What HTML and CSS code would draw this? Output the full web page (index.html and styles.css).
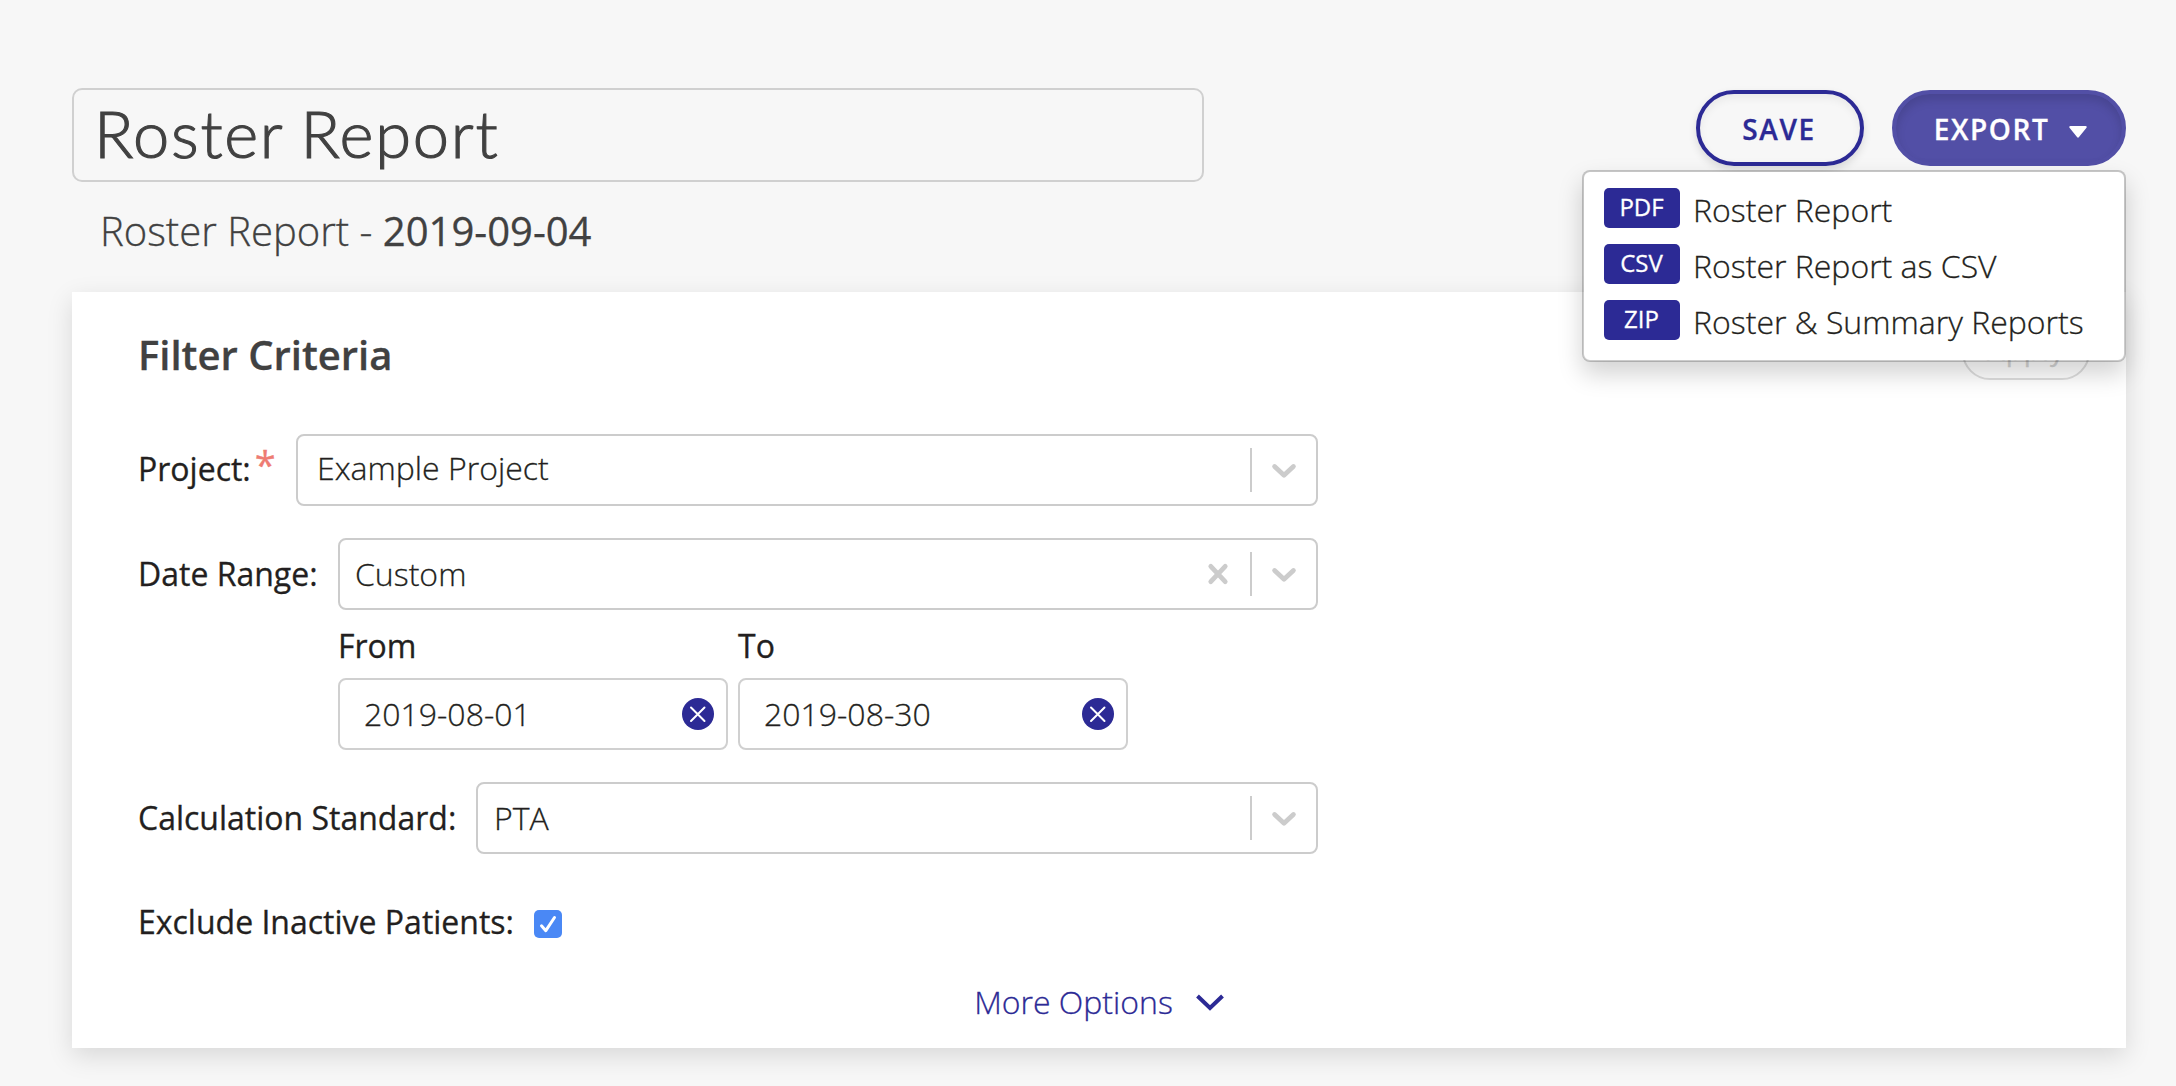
FILE: index.html
```html
<!DOCTYPE html>
<html lang="en">
<head>
  <meta charset="UTF-8">
  <title>Roster Report</title>
  <link rel="stylesheet" href="styles.css">
</head>
<body>
  <div class="page">
    <header class="header">
      <div class="titles">
        <div class="title-input">Roster Report</div>
        <p class="subtitle">Roster Report - <b>2019-09-04</b></p>
      </div>
      <div class="actions">
        <button class="btn save-btn">SAVE</button>
        <div class="dropdown">
          <button class="btn export-btn">EXPORT
            <svg width="18" height="12" viewBox="0 0 18 12"><path d="M1.5 0h15q2 .3.8 2L10 11q-1 1.400-2 0L.7 2Q-.5.3 1.500 0z" fill="#fff"/></svg>
          </button>
          <ul class="menu">
            <li><span class="badge">PDF</span><span class="menu-text">Roster Report</span></li>
            <li><span class="badge">CSV</span><span class="menu-text">Roster Report as CSV</span></li>
            <li><span class="badge">ZIP</span><span class="menu-text">Roster &amp; Summary Reports</span></li>
          </ul>
        </div>
      </div>
    </header>

    <main class="card">
      <div class="card-header">
        <h2>Filter Criteria</h2>
        <button class="apply-btn">Apply</button>
      </div>

      <div class="row project-row">
        <label>Project:<span class="required">*</span></label>
        <div class="select project-select">
          <span class="value">Example Project</span>
          <span class="separator"></span>
          <svg class="arrow" width="40" height="40" viewBox="0 0 40 40"><path d="M10.600 15.500L20 24.300L29.400 15.500"/></svg>
        </div>
      </div>

      <div class="row date-row">
        <label>Date Range:</label>
        <div class="select">
          <span class="value">Custom</span>
          <svg class="clear" width="40" height="40" viewBox="0 0 40 40"><path d="M12.800 12.300L27.200 27.700M27.200 12.300L12.800 27.700"/></svg>
          <span class="separator"></span>
          <svg class="arrow" width="40" height="40" viewBox="0 0 40 40"><path d="M10.600 15.500L20 24.300L29.400 15.500"/></svg>
        </div>
      </div>

      <div class="dates">
        <div class="date-field">
          <label>From</label>
          <div class="date-input">
            <span>2019-08-01</span>
            <svg width="32" height="32" viewBox="0 0 32 32"><circle cx="16" cy="16" r="16" fill="#2c2a95"/><path d="M9 9.500L22.500 23M22.500 9.500L9 23" stroke="#fff" stroke-width="2" stroke-linecap="round"/></svg>
          </div>
        </div>
        <div class="date-field">
          <label>To</label>
          <div class="date-input">
            <span>2019-08-30</span>
            <svg width="32" height="32" viewBox="0 0 32 32"><circle cx="16" cy="16" r="16" fill="#2c2a95"/><path d="M9 9.500L22.500 23M22.500 9.500L9 23" stroke="#fff" stroke-width="2" stroke-linecap="round"/></svg>
          </div>
        </div>
      </div>

      <div class="row standard-row">
        <label>Calculation Standard:</label>
        <div class="select">
          <span class="value">PTA</span>
          <span class="separator"></span>
          <svg class="arrow" width="40" height="40" viewBox="0 0 40 40"><path d="M10.600 15.500L20 24.300L29.400 15.500"/></svg>
        </div>
      </div>

      <div class="row inactive-row">
        <label>Exclude Inactive Patients:</label>
        <span class="checkbox">
          <svg width="28" height="28" viewBox="0 0 28 28"><path d="M7.500 15.800L11.800 20.700L20.500 7.500" fill="none" stroke="#fff" stroke-width="3" stroke-linecap="round" stroke-linejoin="round"/></svg>
        </span>
      </div>

      <a class="more">More Options
        <svg width="28" height="17" viewBox="0 0 28 17"><path d="M1.500 2L14 14L26.500 2" fill="none" stroke="#2c2a95" stroke-width="4"/></svg>
      </a>
    </main>
  </div>
</body>
</html>
```

FILE: styles.css
```css
* {
  box-sizing: border-box;
}

body {
  margin: 0;
  height: 1086px;
  overflow: hidden;
  background: #f7f7f7;
  color: #231f20;
  font-family: "Open Sans", sans-serif;
  font-size: 32px;
  font-weight: 400;
  line-height: 44px;
  -webkit-text-stroke-width: 0.3px;
}

button {
  font-family: inherit;
  padding: 0;
}

svg {
  display: block;
  flex: none;
}

.page {
  padding: 88px 50px 0 72px;
}

.header {
  display: flex;
  justify-content: space-between;
  height: 204px;
}

.title-input {
  width: 1132px;
  height: 94px;
  padding: 0 20px;
  border: 2px solid #d0d0d0;
  border-radius: 10px;
  color: #414141;
  font-family: Lato, sans-serif;
  font-size: 65px;
  font-weight: 300;
  line-height: 87px;
  letter-spacing: 1.7px;
  word-spacing: -2px;
  -webkit-text-stroke-width: 1.1px;
}

.subtitle {
  margin: 21px 0 0 28px;
  color: #414141;
  font-size: 40px;
  font-weight: 300;
  line-height: 56px;
}

.subtitle b {
  font-weight: 400;
}

.actions {
  display: flex;
  align-items: flex-start;
  gap: 28px;
  padding-top: 2px;
}

.btn {
  display: flex;
  align-items: center;
  justify-content: center;
  height: 76px;
  padding-top: 2px;
  border: 4px solid #2c2a95;
  border-radius: 38px;
  font-size: 28px;
  font-weight: 600;
  letter-spacing: 1.6px;
}

.save-btn {
  width: 168px;
  padding-right: 2px;
  background: transparent;
  color: #2c2a95;
  box-shadow: 0 4px 8px rgba(0, 0, 0, 0.12), inset 0 4px 8px rgba(0, 0, 0, 0.06);
}

.export-btn {
  width: 234px;
  gap: 20px;
  padding-left: 3px;
  background: #524fa6;
  border-color: #524fa6;
  color: #fff;
  box-shadow: inset 0 6px 10px rgba(0, 0, 0, 0.125);
}

.export-btn svg {
  margin-top: 6px;
}

.dropdown {
  position: relative;
}

.menu {
  position: absolute;
  top: 80px;
  right: 0;
  z-index: 10;
  display: flex;
  flex-direction: column;
  gap: 16px;
  width: 544px;
  height: 192px;
  margin: 0;
  padding: 16px 20px;
  list-style: none;
  background: #fff;
  background-clip: padding-box;
  border: 2px solid rgba(0, 0, 0, 0.2);
  border-radius: 8px;
  box-shadow: 0 12px 24px rgba(0, 0, 0, 0.175);
}

.menu li {
  display: flex;
  gap: 13px;
  height: 40px;
}

.badge {
  width: 76px;
  padding-right: 1px;
  border-radius: 5px;
  background: #2c2a95;
  color: #fff;
  font-size: 24px;
  line-height: 38px;
  text-align: center;
}

.menu-text {
  font-weight: 300;
  line-height: 43px;
  white-space: nowrap;
}

.card {
  width: 2054px;
  height: 756px;
  padding: 32px 36px 0 66px;
  background: #fff;
  box-shadow: 0 8px 24px rgba(0, 0, 0, 0.125);
}

.card-header {
  display: flex;
  justify-content: space-between;
  height: 110px;
}

.card-header h2 {
  margin: 0;
  color: #414141;
  font-size: 40px;
  font-weight: 600;
  line-height: 61px;
}

.apply-btn {
  width: 128px;
  height: 56px;
  padding-bottom: 7px;
  background: #fff;
  border: 2px solid #dedede;
  border-radius: 28px;
  color: #d4d4d4;
  font-size: 28px;
  letter-spacing: 1px;
}

.row {
  display: flex;
  align-items: center;
  justify-content: space-between;
  width: 1180px;
  height: 72px;
}

.row label {
  white-space: nowrap;
}

.required {
  margin-left: 4px;
  color: #ee7c73;
  font-size: 38px;
  line-height: 0;
  vertical-align: 2px;
}

.select {
  display: flex;
  align-items: center;
  width: 980px;
  height: 72px;
  padding: 0 12px 0 15px;
  border: 2px solid #ccc;
  border-radius: 8px;
}

.project-row label {
  padding-bottom: 3px;
}

.project-select {
  width: 1022px;
  padding-left: 19px;
}

.project-select .value {
  padding-bottom: 5px;
}

.standard-row .select {
  width: 842px;
  padding-left: 16px;
}

.value {
  flex: 1;
  font-weight: 300;
}

.separator {
  width: 2px;
  height: 44px;
  margin-right: 12px;
  background: #ccc;
}

.arrow, .clear {
  fill: none;
  stroke: #ccc;
  stroke-width: 4.8;
  stroke-linecap: round;
  stroke-linejoin: round;
}

.arrow {
  margin-top: 1px;
}

.clear {
  margin-right: 12px;
}

.date-row {
  margin-top: 32px;
}

.dates {
  display: flex;
  gap: 10px;
  margin: 12px 0 0 200px;
}

.date-field {
  width: 390px;
}

.date-field label {
  display: block;
  height: 56px;
  line-height: 48px;
}

.date-input {
  display: flex;
  align-items: center;
  justify-content: space-between;
  height: 72px;
  padding: 0 12px 0 24px;
  border: 2px solid #d0d0d0;
  border-radius: 8px;
  font-weight: 300;
}

.standard-row {
  margin-top: 32px;
}

.inactive-row {
  justify-content: flex-start;
  gap: 20px;
  margin-top: 32px;
}

.checkbox {
  width: 28px;
  height: 28px;
  margin-top: 4px;
  border-radius: 5px;
  background: #4a88f5;
}

.more {
  display: flex;
  align-items: center;
  justify-content: center;
  gap: 23px;
  margin-top: 22px;
  padding-right: 30px;
  color: #2c2a95;
  font-weight: 300;
}
```
